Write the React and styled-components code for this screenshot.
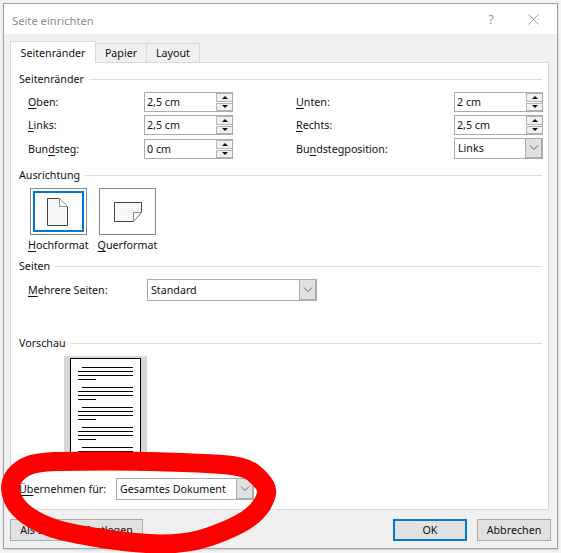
import React from 'react';
import styled, { createGlobalStyle } from 'styled-components';

const GlobalStyle = createGlobalStyle`
    html, body {
        margin: 0;
        padding: 0;
        background: #f3f3f3;
    }
    body {
        font-family: "Noto Sans", "Open Sans", sans-serif;
        font-size: 10.7px;
        color: #111;
    }
`;

const Page = styled.div`
    position: relative;
    width: 561px;
    height: 553px;
    overflow: hidden;
    padding: 3px 3px 0 3px;
    box-sizing: border-box;
`;
const Window = styled.div`
    width: 555px;
    height: 546px;
    box-sizing: border-box;
    border: 1px solid #a0a0a0;
    background: #f0f0f0;
    display: flex;
    flex-direction: column;
    box-shadow: 0 1px 2px rgba(0, 0, 0, 0.15);
`;
const TitleBar = styled.div`
    height: 30px;
    flex: none;
    background: #fff;
    display: flex;
    align-items: center;
    padding: 0 18px 0 8px;
`;
const Title = styled.div`
    flex: 1;
    color: #8e8e8e;
    font-size: 11.2px;
    padding-top: 2px;
`;
const Help = styled.div`
    color: #9a9a9a;
    font-size: 13px;
    margin-right: 34px;
`;
const Body = styled.div`
    flex: 1;
    display: flex;
    flex-direction: column;
    padding: 7px 8px 0 6px;
`;
const TabList = styled.div`
    display: flex;
    align-items: flex-end;
    height: 22px;
    position: relative;
    z-index: 1;
    margin-bottom: -1px;
`;
const Tab = styled.div`
    box-sizing: border-box;
    height: ${(p) => (p.$active ? '22px' : '20px')};
    width: ${(p) => p.$width}px;
    background: ${(p) => (p.$active ? '#fff' : '#f0f0f0')};
    border: 1px solid #d9d9d9;
    border-bottom: ${(p) => (p.$active ? 'none' : '1px solid #d9d9d9')};
    border-left: ${(p) => (p.$active ? '1px solid #d9d9d9' : 'none')};
    display: flex;
    align-items: center;
    justify-content: center;
`;
const Pane = styled.div`
    height: 448px;
    box-sizing: border-box;
    background: #fff;
    border: 1px solid #d9d9d9;
    padding: 8px 6px 0 8px;
    display: flex;
    flex-direction: column;
`;
const SectionHead = styled.div`
    display: flex;
    align-items: center;
    gap: 5px;
    height: 16px;
    margin-top: ${(p) => p.$top || 0}px;

    &::after {
        content: '';
        flex: 1;
        height: 1px;
        background: #dcdcdc;
    }
`;
const MarginGrid = styled.div`
    display: grid;
    grid-template-columns: 116px 89px 63px 158px 89px;
    grid-template-rows: 20px 20px 21px;
    row-gap: 3px;
    margin: 5px 0 0 9px;
    align-items: end;
`;
const Spacer = styled.div``;
const FieldLabel = styled.div`
    white-space: nowrap;
    padding-bottom: ${(p) => p.$lift ?? 3}px;
`;
const Key = styled.span`
    text-decoration: underline;
    text-underline-offset: 2px;
`;
const SpinBox = styled.div`
    box-sizing: border-box;
    height: 20px;
    border: 1px solid #ababab;
    display: flex;
    align-items: center;
    padding: 0 0 0 2px;
    background: #fff;
`;
const SpinValue = styled.div`
    flex: 1;
`;
const SpinButtons = styled.div`
    width: 16px;
    height: 18px;
    display: flex;
    flex-direction: column;
    gap: 1px;
`;
const SpinButton = styled.div`
    flex: 1;
    box-sizing: border-box;
    background: #f0f0f0;
    border: 1px solid #b4b4b4;
    border-right: 0;
    display: flex;
    align-items: center;
    justify-content: center;

    &::before {
        content: '';
        border-left: 3px solid transparent;
        border-right: 3px solid transparent;
        ${(p) => (p.$down ? 'border-top: 3px solid #111;' : 'border-bottom: 3px solid #111;')}
    }
`;
const Combo = styled.div`
    box-sizing: border-box;
    width: ${(p) => p.$width}px;
    height: ${(p) => p.$height || 22}px;
    border: 1px solid #ababab;
    background: #fff;
    display: flex;
    align-items: center;
    padding-left: 3px;
`;
const ComboValue = styled.div`
    flex: 1;
    padding-bottom: 1px;
`;
const ComboButton = styled.div`
    box-sizing: border-box;
    width: 17px;
    align-self: stretch;
    background: #e0e0e0;
    border-left: 1px solid #ababab;
    border-right: 1px solid #adadad;
    border-bottom: 1px solid #adadad;
    display: flex;
    align-items: center;
    justify-content: center;
`;
const Orientation = styled.div`
    display: grid;
    grid-template-columns: 57px 57px;
    column-gap: 12px;
    margin: 5px 0 0 11px;
`;
const OrientationButton = styled.div`
    box-sizing: border-box;
    height: 47px;
    border: 1px solid #8a8a8a;
    padding: 1px ${(p) => (p.$selected ? 2 : 0)}px 0 0;
    display: flex;
    align-items: center;
    justify-content: center;
    position: relative;

    ${(p) =>
        p.$selected &&
        `
        &::after {
            content: '';
            position: absolute;
            inset: 2px;
            border: 2px solid #0078d7;
        }
    `}
`;
const OrientationLabels = styled.div`
    display: flex;
    margin: 2px 0 0 9px;
    gap: 9px;
    height: 16px;
    align-items: center;
`;
const PagesRow = styled.div`
    display: flex;
    align-items: center;
    margin: 5px 0 0 9px;
`;
const PagesLabel = styled.div`
    width: 119px;
`;
const PreviewBox = styled.div`
    width: 83px;
    height: 106px;
    background: #d6d6d6;
    margin: 5px 0 0 45px;
    padding: 2px 6px 0;
    box-sizing: border-box;
`;
const PreviewPage = styled.div`
    height: 104px;
    background: #fff;
    border: 1px solid #000;
    border-bottom: 0;
    padding: 8px 7px 0 7px;
    display: flex;
    flex-direction: column;
`;
const PreviewLine = styled.div`
    height: 1px;
    flex: none;
    background: #000;
    margin-top: ${(p) => (p.$start ? 7 : 3)}px;
    margin-left: ${(p) => (p.$indent ? 4 : 0)}px;
    width: ${(p) => (p.$short ? '18px' : 'auto')};

    &:first-child {
        margin-top: 0;
    }
`;
const ApplyRow = styled.div`
    display: flex;
    align-items: center;
    margin-top: 16px;
`;
const ApplyLabel = styled.div`
    width: 97px;
`;
const Footer = styled.div`
    display: flex;
    align-items: flex-start;
    margin-top: 9px;
    margin-right: -2px;
`;
const Button = styled.div`
    box-sizing: border-box;
    width: ${(p) => p.$width}px;
    height: 22px;
    background: #e1e1e1;
    border: ${(p) => (p.$primary ? '2px solid #0078d7' : '1px solid #adadad')};
    margin-left: ${(p) => p.$gap || 0}px;
    display: flex;
    align-items: center;
    justify-content: center;
`;
const Stroke = styled.svg`
    position: absolute;
    left: 0;
    top: 0;
    pointer-events: none;
`;

const Chevron = () => (
    <svg width="10" height="6" viewBox="0 0 10 6">
        <path d="M1 0.5 L5 4.5 L9 0.5" fill="none" stroke="#666" strokeWidth="1" />
    </svg>
);

const Spin = ({ value }) => (
    <SpinBox>
        <SpinValue>{value}</SpinValue>
        <SpinButtons>
            <SpinButton />
            <SpinButton $down />
        </SpinButtons>
    </SpinBox>
);

const Select = ({ value, width, height }) => (
    <Combo $width={width} $height={height}>
        <ComboValue>{value}</ComboValue>
        <ComboButton>
            <Chevron />
        </ComboButton>
    </Combo>
);

const paragraphs = [0, 1, 2, 3, 4];

// the hand-drawn marker ring, smoothed through the midpoints of these points
const ring = [
    [9, 490], [14, 474], [33, 462], [80, 461], [133, 461], [200, 463], [245, 466], [262, 480],
    [269, 493], [255, 516], [222, 533], [185, 544], [138, 544], [67, 533], [38, 523], [17, 508],
];
const mid = (a, b) => [(a[0] + b[0]) / 2, (a[1] + b[1]) / 2];
const ringPath = () => {
    const start = mid(ring[ring.length - 1], ring[0]);
    const curves = ring.map((pt, i) => {
        const end = mid(pt, ring[(i + 1) % ring.length]);
        return `Q${pt[0]} ${pt[1]} ${end[0]} ${end[1]}`;
    });
    return `M${start[0]} ${start[1]} ${curves.join(' ')} Z`;
};

const App = () => (
    <Page>
        <GlobalStyle />
        <Window>
            <TitleBar>
                <Title>Seite einrichten</Title>
                <Help>?</Help>
                <svg width="11" height="11" viewBox="0 0 11 11">
                    <path d="M0.5 0.5 L10.5 10.5 M10.5 0.5 L0.5 10.5" stroke="#9a9a9a" strokeWidth="1" />
                </svg>
            </TitleBar>
            <Body>
                <TabList>
                    <Tab $active $width={86}>Seitenränder</Tab>
                    <Tab $width={51}>Papier</Tab>
                    <Tab $width={53}>Layout</Tab>
                </TabList>
                <Pane>
                    <SectionHead>Seitenränder</SectionHead>
                    <MarginGrid>
                        <FieldLabel><Key>O</Key>ben:</FieldLabel>
                        <Spin value="2,5 cm" />
                        <Spacer />
                        <FieldLabel><Key>U</Key>nten:</FieldLabel>
                        <Spin value="2 cm" />
                        <FieldLabel><Key>L</Key>inks:</FieldLabel>
                        <Spin value="2,5 cm" />
                        <Spacer />
                        <FieldLabel><Key>R</Key>echts:</FieldLabel>
                        <Spin value="2,5 cm" />
                        <FieldLabel>Bun<Key>d</Key>steg:</FieldLabel>
                        <Spin value="0 cm" />
                        <Spacer />
                        <FieldLabel>Bu<Key>n</Key>dstegposition:</FieldLabel>
                        <Select value="Links" width={89} height={21} />
                    </MarginGrid>
                    <SectionHead $top={8}>Ausrichtung</SectionHead>
                    <Orientation>
                        <OrientationButton $selected>
                            <svg width="21" height="28" viewBox="0 0 21 28">
                                <path d="M12.5 0.5 H0.5 V27.5 H20.5 V8.5 L12.5 0.5 Z" fill="#f7f7f7" stroke="#444" />
                                <path d="M12.5 0.5 V8.5 H20.5 Z" fill="#fff" stroke="#8c8c8c" />
                            </svg>
                        </OrientationButton>
                        <OrientationButton>
                            <svg width="28" height="20" viewBox="0 0 28 20">
                                <path d="M0.5 0.5 H27.5 V10.5 L19.5 19.5 H0.5 Z" fill="#f7f7f7" stroke="#444" />
                                <path d="M27.5 10.5 H19.5 V19.5 Z" fill="#fff" stroke="#8c8c8c" />
                            </svg>
                        </OrientationButton>
                    </Orientation>
                    <OrientationLabels>
                        <FieldLabel $lift={1}><Key>H</Key>ochformat</FieldLabel>
                        <FieldLabel $lift={1}><Key>Q</Key>uerformat</FieldLabel>
                    </OrientationLabels>
                    <SectionHead $top={5}>Seiten</SectionHead>
                    <PagesRow>
                        <PagesLabel><Key>M</Key>ehrere Seiten:</PagesLabel>
                        <Select value="Standard" width={170} />
                    </PagesRow>
                    <SectionHead $top={34}>Vorschau</SectionHead>
                    <PreviewBox>
                        <PreviewPage>
                            {paragraphs.map((i) => (
                                <React.Fragment key={i}>
                                    <PreviewLine $start={i > 0} $indent />
                                    <PreviewLine />
                                    <PreviewLine />
                                    <PreviewLine $short />
                                </React.Fragment>
                            ))}
                        </PreviewPage>
                    </PreviewBox>
                    <ApplyRow>
                        <ApplyLabel><Key>Üb</Key>ernehmen für:</ApplyLabel>
                        <Select value="Gesamtes Dokument" width={138} />
                    </ApplyRow>
                </Pane>
                <Footer>
                    <Button $width={133}>Als Standard festlegen</Button>
                    <Button $primary $width={74} $gap={250}>OK</Button>
                    <Button $width={74} $gap={10}>Abbrechen</Button>
                </Footer>
            </Body>
        </Window>
        <Stroke width="561" height="553" viewBox="0 0 561 553">
            <path d={ringPath()} fill="none" stroke="#ff0000" strokeWidth="19" strokeLinejoin="round" />
        </Stroke>
    </Page>
);

export default App;
